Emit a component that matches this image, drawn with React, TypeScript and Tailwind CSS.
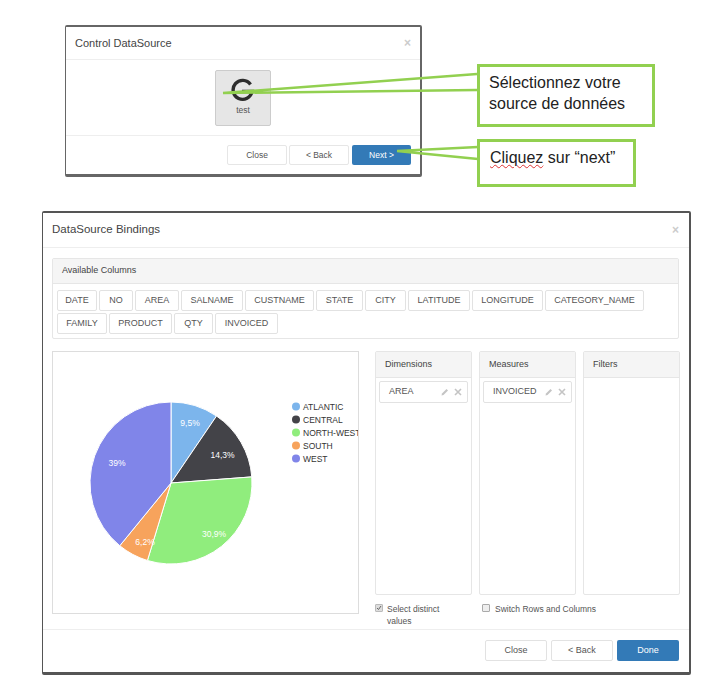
import React from "react";

const Btn = ({ w, label }: { w: string; label: string }) => (
  <div className={`${w} h-[21px] flex items-center justify-center bg-white border border-[#e2e2e2] rounded-[2px] text-[#555] text-[9px] shrink-0`}>{label}</div>
);

const row1: [string, string][] = [
  ["w-[40px]", "DATE"], ["w-[34px]", "NO"], ["w-[44px]", "AREA"], ["w-[62px]", "SALNAME"], ["w-[69px]", "CUSTNAME"],
  ["w-[47px]", "STATE"], ["w-[41px]", "CITY"], ["w-[62px]", "LATITUDE"], ["w-[71px]", "LONGITUDE"], ["w-[99px]", "CATEGORY_NAME"],
];
const row2: [string, string][] = [["w-[50px]", "FAMILY"], ["w-[63px]", "PRODUCT"], ["w-[39px]", "QTY"], ["w-[63px]", "INVOICED"]];

const slices = [
  { v: 9.5, c: "#7cb5ec", n: "ATLANTIC" },
  { v: 14.3, c: "#434348", n: "CENTRAL" },
  { v: 30.9, c: "#90ed7d", n: "NORTH-WEST" },
  { v: 6.2, c: "#f7a35c", n: "SOUTH" },
  { v: 39.1, c: "#8085e9", n: "WEST" },
];

const Pie = () => {
  let a = 0;
  const cx = 118, cy = 131, r = 81;
  const labels: [string, number, number][] = [["9,5%", 137, 74], ["14,3%", 169.5, 106], ["30,9%", 161, 185], ["6,2%", 92, 193], ["39%", 64, 114]];
  return (
    <svg width="305" height="260" viewBox="0 0 305 260" className="block">
      {slices.map((s) => {
        const b = a + (s.v / 100) * Math.PI * 2;
        const p = (t: number) => `${cx + r * Math.sin(t)} ${cy - r * Math.cos(t)}`;
        const d = `M${cx} ${cy}L${p(a)}A${r} ${r} 0 ${b - a > Math.PI ? 1 : 0} 1 ${p(b)}Z`;
        a = b;
        return <path key={s.n} d={d} fill={s.c} stroke="#fff" strokeWidth="1" strokeLinejoin="round" />;
      })}
      {labels.map(([t, x, y]) => (
        <text key={t} x={x} y={y} textAnchor="middle" fill="#fff" fontSize="8.5" fontFamily="Liberation Sans, sans-serif">{t}</text>
      ))}
      {slices.map((s, i) => (
        <g key={s.n}>
          <circle cx="243" cy={54.5 + i * 13} r="4" fill={s.c} />
          <text x="250" y={58 + i * 13} fill="#333" fontSize="8.5" fontFamily="Liberation Sans, sans-serif">{s.n}</text>
        </g>
      ))}
    </svg>
  );
};

const Item = ({ label, w }: { label: string; w: string }) => (
  <div className={`${w} h-[22px] m-[3px] mt-[3px] flex items-center justify-between pl-[9px] pr-[5px] bg-white border border-[#e2e2e2] rounded-[2px] text-[#555] text-[9px]`}>
    <span>{label}</span>
    <span className="flex items-center gap-[5px]">
      <svg width="8" height="8" viewBox="0 0 8 8"><path d="M0.5 7.5 L1 5.5 L5.5 1 L7 2.5 L2.5 7 Z" fill="#c4c4c4" /></svg>
      <svg width="8" height="8" viewBox="0 0 8 8"><path d="M1 1 L7 7 M7 1 L1 7" stroke="#c4c4c4" strokeWidth="1.6" /></svg>
    </span>
  </div>
);

const Panel = ({ title, children }: { title: string; children?: React.ReactNode }) => (
  <div className="w-[97px] h-[244px] border border-[#e6e6e6] rounded-[2px] bg-white">
    <div className="h-[26px] bg-[#f5f5f5] border-b border-[#e6e6e6] flex items-center pl-[9px] text-[9px] text-[#444]">{title}</div>
    {children}
  </div>
);

export default function App() {
  return (
    <div className="relative w-[713px] h-[688px] overflow-hidden bg-white pt-[25px] font-['Liberation_Sans',Arial,sans-serif] text-[#333]">
      {/* first dialog */}
      <div className="ml-[65px] w-[357px] h-[152px] bg-white border-[#666] border-t-2 border-r-2 border-b-[3px] border-l rounded-[2px] flex flex-col">
        <div className="h-[33px] border-b border-[#eee] flex items-center justify-between pl-[9px] pr-[9px] shrink-0">
          <span className="text-[11px] text-[#444]">Control DataSource</span>
          <span className="text-[12px] font-bold text-[#ccc]">×</span>
        </div>
        <div className="h-[76px] border-b border-[#eee] flex justify-center items-center shrink-0">
          <div className="w-[56px] h-[56px] bg-[#e6e6e6] border border-[#ccc] rounded-[2px] flex flex-col items-center pt-[7px]">
            <svg width="24" height="24" viewBox="0 0 24 24">
              <path d="M19.5 6.5 A9.5 9.5 0 1 0 21 13.5 L11 13.5" fill="none" stroke="#2d2d2d" strokeWidth="3.4" />
            </svg>
            <span className="text-[8.5px] text-[#555] mt-[2px]">test</span>
          </div>
        </div>
        <div className="flex-1 flex justify-end items-start pt-[9px] pr-[9px] gap-[2px]">
          <div className="w-[60px] h-[20px] flex items-center justify-center border border-[#e6e6e6] rounded-[2px] text-[8.5px] text-[#555]">Close</div>
          <div className="w-[60px] h-[20px] flex items-center justify-center border border-[#e6e6e6] rounded-[2px] text-[8.5px] text-[#555] mr-[1px]">&lt; Back</div>
          <div className="w-[59px] h-[20px] flex items-center justify-center bg-[#337ab7] rounded-[2px] text-[8.5px] text-white">Next &gt;</div>
        </div>
      </div>

      {/* second dialog */}
      <div className="mt-[34px] ml-[42px] w-[649px] h-[464px] bg-white border-[#555] border-t-2 border-r-2 border-b-[3px] border-l flex flex-col rounded-[2px]">
        <div className="h-[35px] border-b border-[#eee] flex items-center justify-between pl-[9px] pr-[10px] shrink-0">
          <span className="text-[11.5px] text-[#444]">DataSource Bindings</span>
          <span className="text-[12px] font-bold text-[#ccc]">×</span>
        </div>
        <div className="flex-1 pt-[10px] pl-[9px] pr-[10px]">
          <div className="h-[81px] border border-[#e6e6e6] rounded-[2px]">
            <div className="h-[25px] bg-[#f5f5f5] border-b border-[#e6e6e6] flex items-center pl-[9px] text-[9px] text-[#444]">Available Columns</div>
            <div className="pl-[4px] pt-[6px] flex flex-col gap-[2px]">
              <div className="flex gap-[2px]">{row1.map(([w, l]) => <Btn key={l} w={w} label={l} />)}</div>
              <div className="flex gap-[2px]">{row2.map(([w, l]) => <Btn key={l} w={w} label={l} />)}</div>
            </div>
          </div>
          <div className="mt-[12px] flex">
            <div className="w-[307px] h-[263px] border border-[#ddd] shrink-0"><Pie /></div>
            <div className="ml-[16px] flex flex-col">
              <div className="flex gap-[7px]">
                <Panel title="Dimensions"><Item label="AREA" w="w-[89px]" /></Panel>
                <Panel title="Measures"><Item label="INVOICED" w="w-[89px]" /></Panel>
                <Panel title="Filters" />
              </div>
              <div className="flex mt-[8px] text-[8.5px] text-[#555] leading-[12px]">
                <div className="w-[107px] flex items-start gap-[4px]">
                  <span className="w-[8px] h-[8px] mt-[1px] bg-[#ddd] border border-[#bbb] rounded-[1px] flex items-center justify-center shrink-0">
                    <svg width="6" height="6" viewBox="0 0 6 6"><path d="M1 3 L2.5 4.5 L5 1" fill="none" stroke="#666" strokeWidth="1" /></svg>
                  </span>
                  <span className="w-[62px]">Select distinct values</span>
                </div>
                <div className="flex items-start gap-[5px]">
                  <span className="w-[8px] h-[8px] mt-[1px] bg-[#eee] border border-[#aaa] rounded-[1px] shrink-0" />
                  <span>Switch Rows and Columns</span>
                </div>
              </div>
            </div>
          </div>
        </div>
        <div className="h-[43px] border-t border-[#eee] flex justify-end items-start pt-[10px] pr-[10px] gap-[4px] shrink-0">
          <div className="w-[62px] h-[21px] flex items-center justify-center border border-[#e2e2e2] rounded-[2px] text-[9px] text-[#555]">Close</div>
          <div className="w-[62px] h-[21px] flex items-center justify-center border border-[#e2e2e2] rounded-[2px] text-[9px] text-[#555]">&lt; Back</div>
          <div className="w-[62px] h-[21px] flex items-center justify-center bg-[#337ab7] rounded-[2px] text-[9px] text-white">Done</div>
        </div>
      </div>

      {/* annotation overlays */}
      <svg className="absolute left-0 top-0 pointer-events-none" width="713" height="688" viewBox="0 0 713 688">
        <path d="M223 93 L477 74 M223 93 L477 90 M397 151 L478 147 M397 151 L478 159" stroke="#92d050" strokeWidth="2.5" fill="none" />
      </svg>
      <div className="absolute left-[477px] top-[64px] w-[178px] h-[63px] bg-white border-[3px] border-[#92d050] pl-[9px] pt-[5px] text-[16px] leading-[21px] text-[#222]">
        Sélectionnez votre<br />source de données
      </div>
      <div className="absolute left-[477px] top-[139px] w-[159px] h-[48px] bg-white border-[3px] border-[#92d050] pl-[10px] pt-[5px] text-[16px] leading-[21px] text-[#222]">
        <span className="underline decoration-wavy decoration-[#d33] decoration-1">Cliquez</span> sur “next”
      </div>
    </div>
  );
}
